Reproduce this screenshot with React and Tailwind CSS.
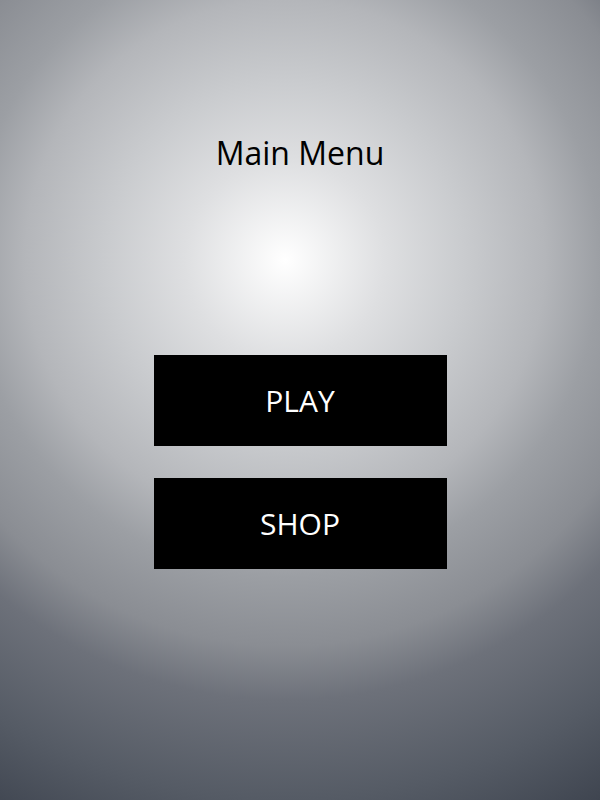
export default function App() {
  return (
    <div className="w-[600px] h-[800px] flex flex-col items-center pt-[133px] font-['Open_Sans',sans-serif] bg-[radial-gradient(circle_625px_at_285px_260px,#ffffff_0px,#dedfe1_100px,#c9cbce_180px,#b4b6ba_260px,#9c9fa4_315px,#8a8d93_386px,#6d717a_440px,#555b65_540px,#3f4550_625px)]">
      <h1 className="h-[40px] leading-[40px] text-[32px] text-black">Main Menu</h1>
      <div className="mt-[182px] flex flex-col gap-[32px]">
        <button className="w-[293px] h-[91px] bg-black text-white text-[30px] leading-[40px]">PLAY</button>
        <button className="w-[293px] h-[91px] bg-black text-white text-[30px] leading-[40px]">SHOP</button>
      </div>
    </div>
  );
}
